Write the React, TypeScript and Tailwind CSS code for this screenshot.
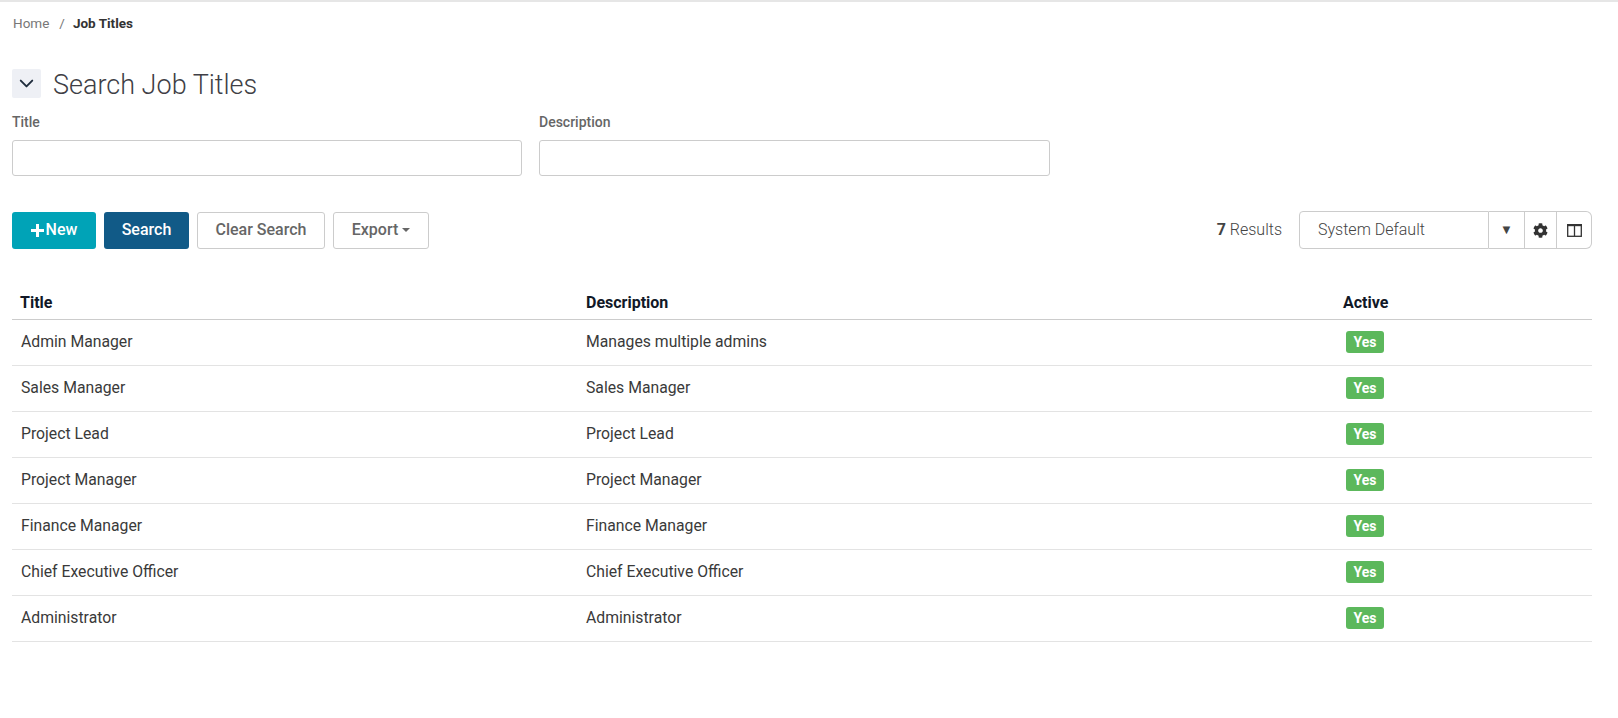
import { ChevronDown } from 'lucide-react';
import { FaCog } from 'react-icons/fa';

const rows = [
    ['Admin Manager', 'Manages multiple admins'],
    ['Sales Manager', 'Sales Manager'],
    ['Project Lead', 'Project Lead'],
    ['Project Manager', 'Project Manager'],
    ['Finance Manager', 'Finance Manager'],
    ['Chief Executive Officer', 'Chief Executive Officer'],
    ['Administrator', 'Administrator'],
];

function Field({ label, className }: { label: string; className: string }) {
    return (
        <div className={className}>
            <label className="block h-[18px] text-[14px] leading-[18px] font-medium text-[#666666]">{label}</label>
            <input className="mt-[9px] block h-[36px] w-full rounded-[3px] border border-[#cccccc] bg-white" />
        </div>
    );
}

export default function App() {
    return (
        <div className="min-h-[718px] bg-white font-['Roboto',sans-serif] text-[#333333]">
            <div className="h-[2px] bg-[#e6e6e6]" />
            <div className="pl-3 pr-[26px]">
                <nav className="mt-[13px] flex h-[16px] items-center text-[13.5px] leading-[16px]">
                    <span className="ml-px text-[#777777]">Home</span>
                    <span className="ml-[10px] text-[#777777]">/</span>
                    <span className="ml-[8px] font-bold">Job Titles</span>
                </nav>

                <div className="mt-[38px] flex h-[29px] items-center">
                    <button className="flex h-[29px] w-[29px] items-center justify-center rounded-[2px] bg-[#eef0f5] text-[#1f2d3d]">
                        <ChevronDown size={23} strokeWidth={2} />
                    </button>
                    <h1 className="ml-[12px] pt-[4px] text-[27px] leading-[29px] font-light text-[#3f3f46]">Search Job Titles</h1>
                </div>

                <div className="mt-[15px] flex gap-[17px]">
                    <Field label="Title" className="w-[510px]" />
                    <Field label="Description" className="w-[511px]" />
                </div>

                <div className="mt-[35px] flex h-[38px] items-center text-[16px]">
                    <button className="flex h-[37px] w-[84px] items-center justify-center rounded-[3px] bg-[#00a3b7] font-medium text-white">
                        <svg width="13" height="13" viewBox="0 0 13 13" fill="currentColor" className="mr-[2px]">
                            <path d="M5 0h3v5h5v3H8v5H5V8H0V5h5z" />
                        </svg>
                        New
                    </button>
                    <button className="ml-2 h-[37px] w-[85px] rounded-[3px] bg-[#115a87] font-medium text-white">Search</button>
                    <button className="ml-2 h-[37px] w-[128px] rounded-[3px] border border-[#cccccc] font-medium text-[#666666]">Clear Search</button>
                    <button className="ml-2 flex h-[37px] w-[96px] items-center justify-center rounded-[3px] border border-[#cccccc] font-medium text-[#666666]">
                        Export
                        <span className="ml-[4px] h-0 w-0 border-x-[4px] border-t-[4px] border-x-transparent border-t-[#666666]" />
                    </button>

                    <div className="ml-auto flex items-center">
                        <span className="font-light text-[#444444]"><b className="font-bold">7</b> Results</span>
                        <div className="ml-[17px] flex h-[38px] w-[190px] items-center rounded-l-[4px] border border-[#cccccc] pl-[18px] font-light text-[#444444]">System Default</div>
                        <div className="flex h-[38px] w-[36px] items-center justify-center border-y border-r border-[#cccccc] text-[13px] text-[#444444]">▼</div>
                        <div className="flex h-[38px] w-[32px] items-center justify-center border-y border-r border-[#cccccc] text-[#333333]"><FaCog size={15} /></div>
                        <div className="flex h-[38px] w-[35px] items-center justify-center rounded-r-[6px] border-y border-r border-[#cccccc]">
                            <svg width="15" height="13" viewBox="0 0 15 13" fill="none" stroke="#333333" strokeWidth="1.3">
                                <rect x="0.7" y="0.7" width="13.6" height="11.6" />
                                <path d="M7.5 1v11" />
                                <path d="M0 1.2h15" strokeWidth="2" />
                            </svg>
                        </div>
                    </div>
                </div>

                <table className="mt-[36px] w-full table-fixed border-collapse text-[16px]">
                    <colgroup>
                        <col className="w-[566px]" />
                        <col className="w-[757px]" />
                        <col />
                    </colgroup>
                    <thead>
                        <tr className="h-[34px] border-b border-[#cccccc] text-left text-[#111827]">
                            <th className="pl-2 pt-[2px] font-bold">Title</th>
                            <th className="pl-2 pt-[2px] font-bold">Description</th>
                            <th className="pl-2 pt-[2px] font-bold">Active</th>
                        </tr>
                    </thead>
                    <tbody>
                        {rows.map(([title, description]) => (
                            <tr key={title} className="h-[46px] border-b border-[#e3e3e3] text-[15.75px] text-[#3a3a3a]">
                                <td className="pl-[9px]">{title}</td>
                                <td className="pl-2">{description}</td>
                                <td className="pl-[11px]">
                                    <span className="inline-block h-[22px] w-[38px] rounded-[3px] bg-[#5cb85c] text-center text-[14px] leading-[22px] font-bold text-white">Yes</span>
                                </td>
                            </tr>
                        ))}
                    </tbody>
                </table>
            </div>
        </div>
    );
}
